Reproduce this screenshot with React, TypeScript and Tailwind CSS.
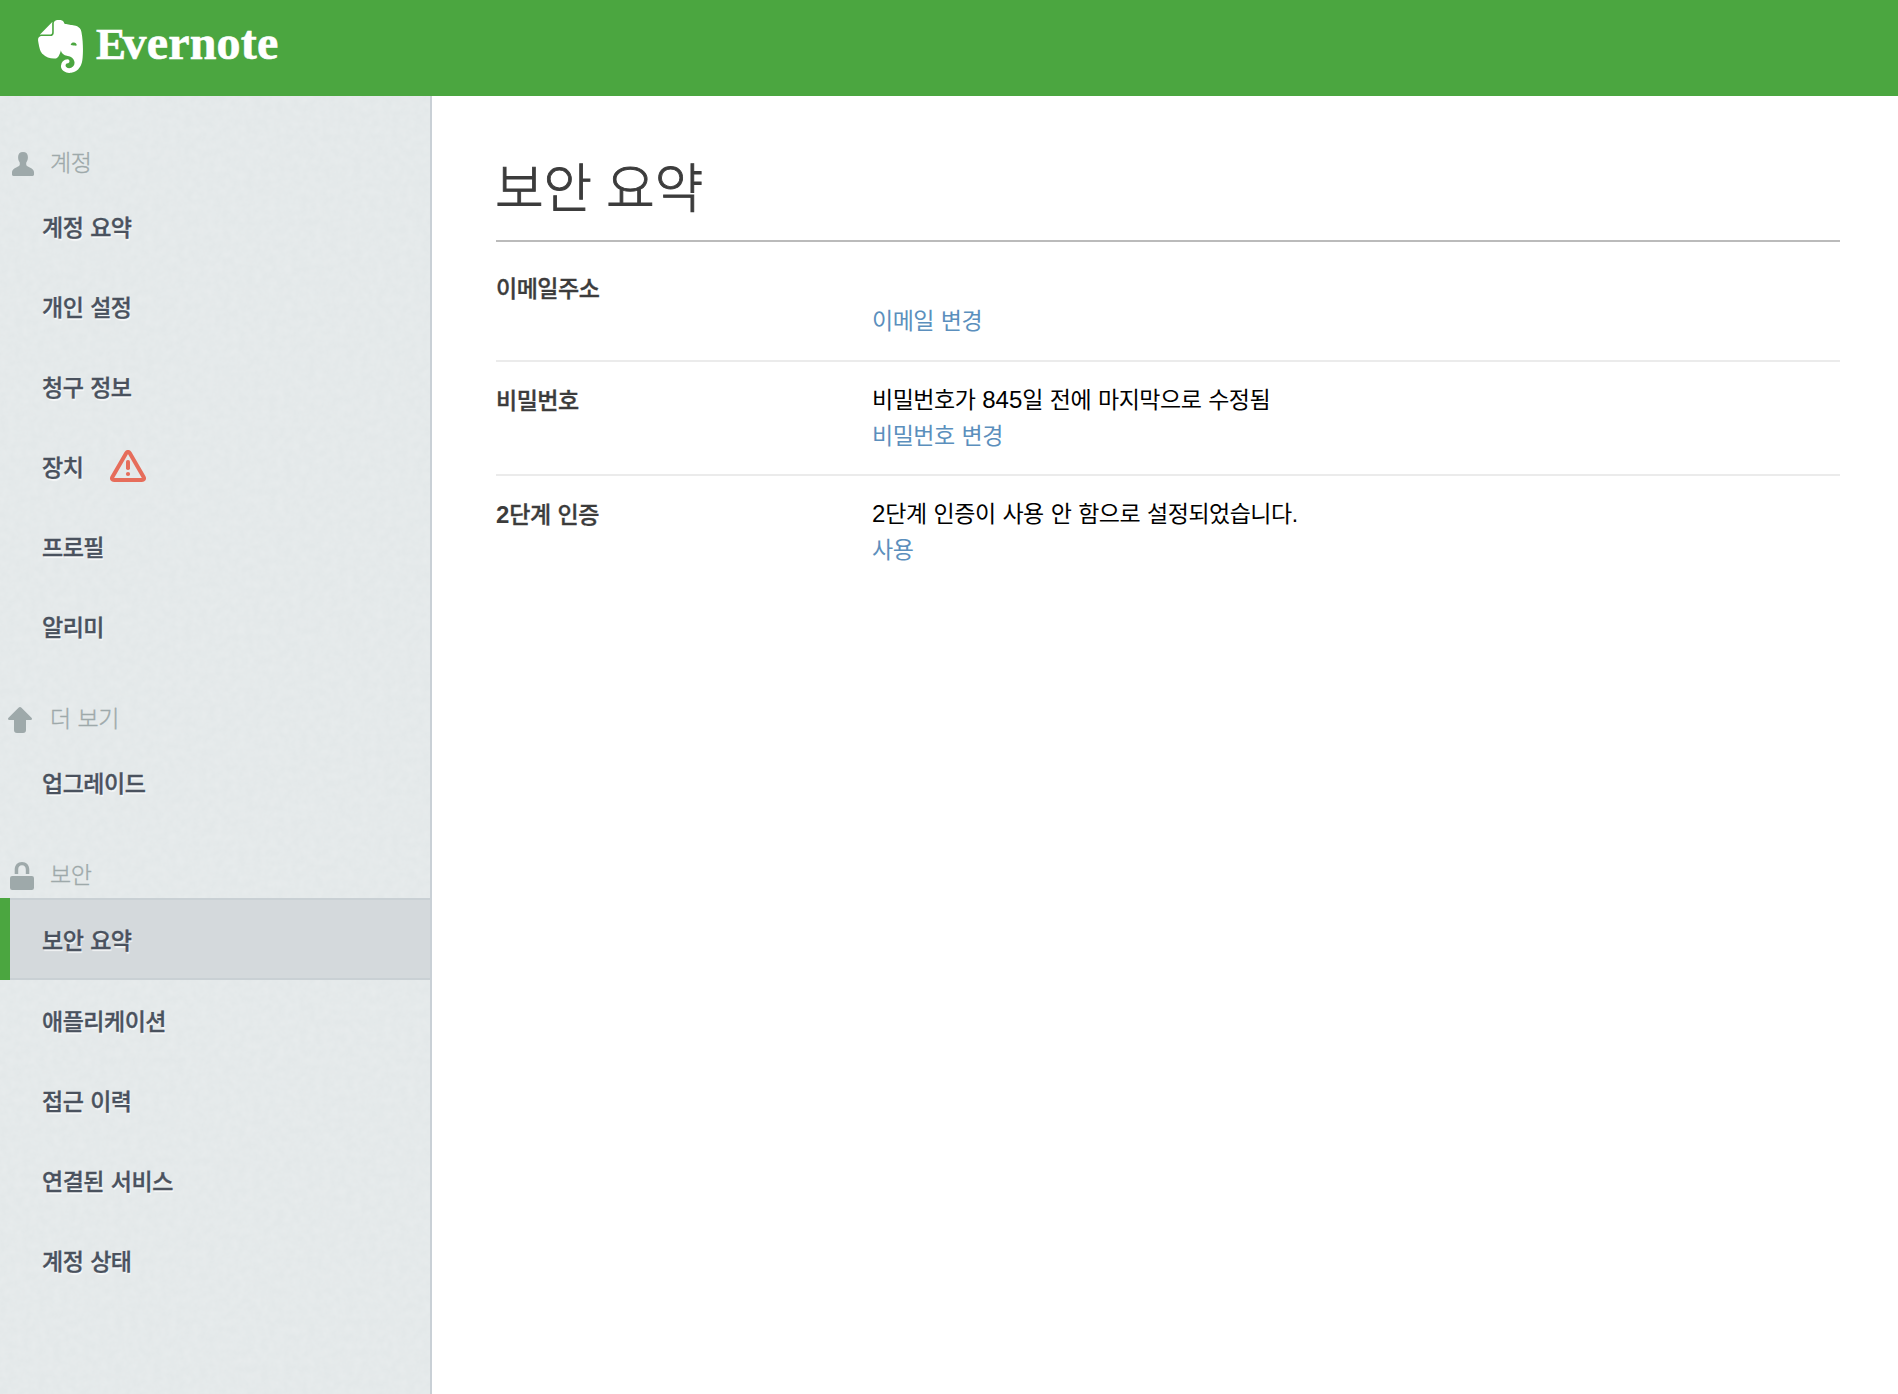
import type { ReactNode } from "react";
import { SiEvernote } from "react-icons/si";

function UserIcon() {
  return (
    <svg className="ml-3 h-6 w-[22px]" viewBox="0 0 22 24" fill="#9ea9aa">
      <path d="M11 0c3.200 0 4.900 1.900 4.900 5 0 2-.4 3.600-1.200 4.700-.5.700-.5 1.400-.5 2.600 0 1.500 1.100 2 3.100 2.900C20.300 16.500 22 18 22 20v2.600c0 .9-.5 1.400-1.400 1.400H1.400C.5 24 0 23.500 0 22.600V20c0-2 1.700-3.500 4.700-4.800 2-.9 3.100-1.400 3.100-2.900 0-1.200 0-1.900-.5-2.600C6.500 8.600 6.100 7 6.100 5c0-3.100 1.700-5 4.900-5z" />
    </svg>
  );
}

function ArrowUpIcon() {
  return (
    <svg className="ml-2 h-[26px] w-6" viewBox="0 0 24 26" fill="#9ea9aa">
      <path d="M12 0c.6 0 1 .2 1.500.7l10 10.100c.9 1 .6 2.200-.8 2.200H18v10c0 2-1 3-3 3H9c-2 0-3-1-3-3V13H1.300C-.1 13-.4 11.800.5 10.800l10-10.100C11 .2 11.400 0 12 0z" />
    </svg>
  );
}

function LockIcon() {
  return (
    <svg className="ml-2.5 h-7 w-6" viewBox="0 0 24 28" fill="#9ea9aa">
      <path d="M4.700 12V7.500C4.700 3 7.600 0 12 0s7.300 3 7.300 7.500V12h-3.500V7.500c0-2.600-1.300-4.200-3.800-4.200S8.200 4.900 8.200 7.500V12z" />
      <rect y="14" width="24" height="14" rx="2.200" />
    </svg>
  );
}

function WarningIcon() {
  return (
    <svg className="ml-[27px] h-8 w-9" viewBox="0 0 36 32" fill="none">
      <path
        d="M16.300 3 2.400 27c-1 1.800-.1 2.900 1.700 2.900h27.800c1.800 0 2.700-1.100 1.700-2.900L19.700 3c-.9-1.500-2.500-1.500-3.400 0z"
        stroke="#e66d5b"
        strokeWidth="4"
        strokeLinejoin="round"
      />
      <rect x="16" y="10" width="4" height="10" rx="1.800" fill="#e66d5b" />
      <circle cx="18" cy="24" r="2.100" fill="#e66d5b" />
    </svg>
  );
}

function PaperTexture() {
  return (
    <svg className="absolute inset-0 h-full w-full" aria-hidden="true">
      <filter id="paper" x="0" y="0" width="100%" height="100%">
        <feTurbulence type="fractalNoise" baseFrequency="0.13" numOctaves="3" seed="4" />
        <feColorMatrix values="0 0 0 0 1  0 0 0 0 1  0 0 0 0 1  0.24 0 0 0 -0.06" />
      </filter>
      <rect width="100%" height="100%" filter="url(#paper)" />
    </svg>
  );
}

function Section({ icon, title, children }: { icon: ReactNode; title: string; children: ReactNode }) {
  return (
    <section className="mb-7">
      <h2 className="flex h-12 items-center pt-[3px] text-[23px] font-light tracking-[-0.5px] text-[#9ea9aa] [-webkit-text-stroke:0.35px_#9ea9aa] [word-spacing:1px]">
        <span className="flex w-[50px] shrink-0 items-center">{icon}</span>
        {title}
      </h2>
      <ul>{children}</ul>
    </section>
  );
}

function Item({ label, active, badge }: { label: string; active?: boolean; badge?: ReactNode }) {
  const text = (
    <a className="pt-1 text-[23px] font-medium tracking-[-0.5px] text-[#4a525e] [-webkit-text-stroke:0.35px_#4a525e] [text-shadow:1px_2px_1px_rgba(255,255,255,0.7)] [word-spacing:1px]">
      {label}
    </a>
  );
  if (active) {
    return (
      <li className="flex h-[82px]">
        <span className="w-2.5 shrink-0 bg-[#4ba640]" />
        <div className="flex flex-1 items-center border-y-2 border-[#c9d0d4] bg-[#d4d9dc] pl-8 pt-px">{text}</div>
      </li>
    );
  }
  return (
    <li className="flex h-20 items-center pl-[42px]">
      {text}
      {badge}
    </li>
  );
}

function Row({ label, children, last }: { label: ReactNode; children: ReactNode; last?: boolean }) {
  return (
    <div className={last ? "flex h-[114px] pt-5" : "flex h-[114px] border-b-2 border-[#ebebeb] pt-5"}>
      <div className="w-[376px] shrink-0 pt-px text-[23px] font-medium leading-9 tracking-[-0.5px] text-[#3c3c3c] [-webkit-text-stroke:0.35px_#3c3c3c] [word-spacing:1px]">
        {label}
      </div>
      <div className="text-[23px] leading-9 tracking-[-0.5px] text-black [word-spacing:1px]">{children}</div>
    </div>
  );
}

function Num({ children, bold }: { children: ReactNode; bold?: boolean }) {
  return (
    <span
      className={
        bold
          ? "text-[24px] font-bold leading-none tracking-normal [-webkit-text-stroke:0]"
          : "text-[24px] leading-none tracking-normal"
      }
    >
      {children}
    </span>
  );
}

export default function App() {
  return (
    <div className="flex h-[1394px] w-full flex-col overflow-hidden bg-white font-['Liberation_Sans','Noto_Sans_CJK_KR',sans-serif]">
      <header className="flex h-24 shrink-0 items-start bg-[#4ba640] text-white">
        <SiEvernote className="ml-[34px] mt-5 size-[53px]" />
        <div className="ml-[9px] mt-[18px] font-['Liberation_Serif',serif] text-[48px] font-bold leading-[50px] tracking-[0.2px] [-webkit-text-stroke:0.6px_white]">
          <span className="text-[45px] tracking-[-3.500px]">E</span>vernote
        </div>
      </header>
      <div className="flex min-h-0 flex-1">
        <aside className="relative w-[432px] shrink-0 border-r-2 border-[#c9d0d6] bg-[#e3e8e9]">
          <PaperTexture />
          <nav className="relative pt-[42px]">
            <Section icon={<UserIcon />} title="계정">
              <Item label="계정 요약" />
              <Item label="개인 설정" />
              <Item label="청구 정보" />
              <Item label="장치" badge={<WarningIcon />} />
              <Item label="프로필" />
              <Item label="알리미" />
            </Section>
            <Section icon={<ArrowUpIcon />} title="더 보기">
              <Item label="업그레이드" />
            </Section>
            <Section icon={<LockIcon />} title="보안">
              <Item label="보안 요약" active />
              <Item label="애플리케이션" />
              <Item label="접근 이력" />
              <Item label="연결된 서비스" />
              <Item label="계정 상태" />
            </Section>
          </nav>
        </aside>
        <main className="flex-1 pl-16 pr-[58px]">
          <h1 className="flex h-[146px] items-end border-b-2 border-[#bbbbbb] pb-[11px] text-[53px] font-light tracking-[-0.4px] text-[#3c3c3c] [-webkit-text-stroke:0.9px_#3c3c3c]">
            <span className="-ml-px">보안 요약</span>
          </h1>
          <div className="flex h-[120px] border-b-2 border-[#ebebeb] pt-[29px] text-[23px] leading-9 tracking-[-0.5px] [word-spacing:1px]">
            <div className="w-[376px] shrink-0 font-medium text-[#3c3c3c] [-webkit-text-stroke:0.35px_#3c3c3c]">
              이메일주소
            </div>
            <a className="pt-8 text-[#5b8fbd]">이메일 변경</a>
          </div>
          <Row label="비밀번호">
            <p>
              비밀번호가 <Num>845</Num>일 전에 마지막으로 수정됨
            </p>
            <a className="text-[#5b8fbd]">비밀번호 변경</a>
          </Row>
          <Row
            last
            label={
              <>
                <Num bold>2</Num>단계 인증
              </>
            }
          >
            <p>
              <Num>2</Num>단계 인증이 사용 안 함으로 설정되었습니다.
            </p>
            <a className="text-[#5b8fbd]">사용</a>
          </Row>
        </main>
      </div>
    </div>
  );
}
